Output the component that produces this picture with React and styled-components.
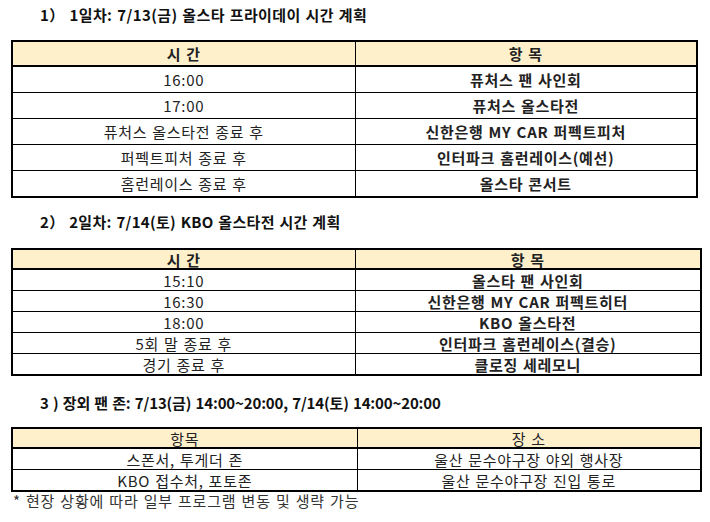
import React from "react";
import styled, { createGlobalStyle } from "styled-components";

const GlobalStyle = createGlobalStyle`
  html, body {
    margin: 0;
    padding: 0;
    background: #ffffff;
  }
  body {
    font-family: "Noto Sans CJK KR", "Noto Sans", "Liberation Sans", sans-serif;
    color: #222222;
  }
`;

const Page = styled.div`
  width: 710px;
  height: 522px;
  padding: 4px 0 0 11px;
  box-sizing: border-box;
  overflow: hidden;
`;

const Title = styled.div`
  font-size: 15px;
  font-weight: 700;
  line-height: 20px;
  padding-left: 29px;
  margin-top: ${(p) => p.$top}px;
  margin-bottom: ${(p) => p.$bottom}px;
  color: #111111;
  letter-spacing: ${(p) => p.$ls ?? 0.4}px;
  word-spacing: 1px;
  white-space: nowrap;
`;

const Table = styled.table`
  width: ${(p) => p.$width}px;
  border-collapse: collapse;
  border: 2px solid #000000;
  table-layout: fixed;
  font-size: 15px;
  letter-spacing: 0.7px;
  word-spacing: 1px;
`;

const HeadCell = styled.th`
  background: #fff0cc;
  border-bottom: 2px solid #000000;
  border-left: 1px solid #000000;
  height: ${(p) => p.$h}px;
  padding: 0;
  line-height: 1;
  font-weight: ${(p) => (p.$bold ? 700 : 400)};
  text-align: center;
  color: #222222;
  &:first-child {
    border-left: none;
  }
`;

const Cell = styled.td`
  border-top: 1px solid #000000;
  border-left: 1px solid #000000;
  height: ${(p) => p.$h}px;
  padding: 0;
  line-height: 1;
  text-align: center;
  white-space: nowrap;
  font-weight: ${(p) => (p.$bold ? 700 : 400)};
  color: #222222;
  &:first-child {
    border-left: none;
  }
`;

const Note = styled.div`
  font-size: 15px;
  line-height: 18px;
  padding-left: 2px;
  color: #333333;
  letter-spacing: 0.8px;
  word-spacing: 1px;
`;

const day1 = [
  ["16:00", "퓨처스 팬 사인회"],
  ["17:00", "퓨처스 올스타전"],
  ["퓨처스 올스타전 종료 후", "신한은행 MY CAR 퍼펙트피처"],
  ["퍼펙트피처 종료 후", "인터파크 홈런레이스(예선)"],
  ["홈런레이스 종료 후", "올스타 콘서트"],
];

const day2 = [
  ["15:10", "올스타 팬 사인회"],
  ["16:30", "신한은행 MY CAR 퍼펙트히터"],
  ["18:00", "KBO 올스타전"],
  ["5회 말 종료 후", "인터파크 홈런레이스(결승)"],
  ["경기 종료 후", "클로징 세레모니"],
];

const zone = [
  ["스폰서, 투게더 존", "울산 문수야구장 야외 행사장"],
  ["KBO 접수처, 포토존", "울산 문수야구장 진입 통로"],
];

const Schedule = ({ width, head, headH, rowH, headBold, rightBold, rows, split }) => (
  <Table $width={width}>
    <colgroup>
      <col style={{ width: split }} />
      <col />
    </colgroup>
    <thead>
      <tr>
        <HeadCell $h={headH} $bold={headBold}>{head[0]}</HeadCell>
        <HeadCell $h={headH} $bold={headBold}>{head[1]}</HeadCell>
      </tr>
    </thead>
    <tbody>
      {rows.map((r) => (
        <tr key={r[0]}>
          <Cell $h={rowH}>{r[0]}</Cell>
          <Cell $h={rowH} $bold={rightBold}>{r[1]}</Cell>
        </tr>
      ))}
    </tbody>
  </Table>
);

export default function App() {
  return (
    <>
      <GlobalStyle />
      <Page>
        <Title $top={1} $bottom={15}>1） 1일차: 7/13(금) 올스타 프라이데이 시간 계획</Title>
        <Schedule
          width={687}
          split={343}
          head={["시 간", "항 목"]}
          headH={23}
          rowH={25}
          headBold
          rightBold
          rows={day1}
        />
        <Title $top={14} $bottom={16} $ls={0.3}>2） 2일차: 7/14(토) KBO 올스타전 시간 계획</Title>
        <Schedule
          width={691}
          split={343}
          head={["시 간", "항 목"]}
          headH={18}
          rowH={20}
          headBold
          rightBold
          rows={day2}
        />
        <Title $top={17} $bottom={14} $ls={-0.15}>3 ) 장외 팬 존: 7/13(금) 14:00~20:00, 7/14(토) 14:00~20:00</Title>
        <Schedule
          width={691}
          split={345}
          head={["항목", "장 소"]}
          headH={18}
          rowH={20}
          rows={zone}
        />
        <Note>* 현장 상황에 따라 일부 프로그램 변동 및 생략 가능</Note>
      </Page>
    </>
  );
}
